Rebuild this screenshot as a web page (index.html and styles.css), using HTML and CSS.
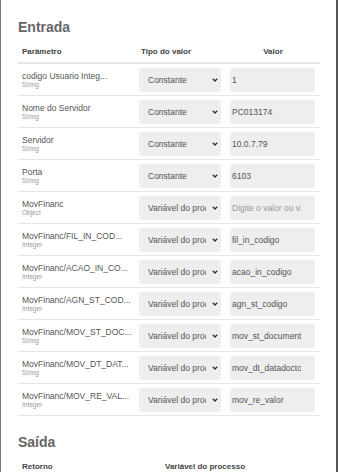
FILE: index.html
```html
<!DOCTYPE html>
<html lang="pt">
<head>
    <meta charset="UTF-8">
    <meta name="viewport" content="width=device-width, initial-scale=1.0">
    <title>Parâmetros</title>
    <link rel="stylesheet" href="styles.css">
</head>
<body>

    <div class="frame">
        <!-- Entrada -->
        <section class="section">
            <h2 class="section-title">Entrada</h2>
            <table class="param-table">
                <colgroup>
                    <col class="col-name">
                    <col class="col-type">
                    <col class="col-value">
                </colgroup>
                <thead>
                    <tr>
                        <th>Parâmetro</th>
                        <th class="th-type">Tipo do valor</th>
                        <th class="th-value">Valor</th>
                    </tr>
                </thead>
                <tbody>
                    <tr>
                        <td><div class="param-name">codigo Usuario Integ...</div><div class="param-kind">String</div></td>
                        <td><div class="select-box"><select><option>Constante</option></select><svg class="select-arrow" width="6" height="4" viewBox="0 0 6 4"><path d="M0.8 0.8 L3 3 L5.2 0.8" fill="none" stroke="#333" stroke-width="1.4"/></svg></div></td>
                        <td><input type="text" value="1"></td>
                    </tr>
                    <tr>
                        <td><div class="param-name">Nome do Servidor</div><div class="param-kind">String</div></td>
                        <td><div class="select-box"><select><option>Constante</option></select><svg class="select-arrow" width="6" height="4" viewBox="0 0 6 4"><path d="M0.8 0.8 L3 3 L5.2 0.8" fill="none" stroke="#333" stroke-width="1.4"/></svg></div></td>
                        <td><input type="text" value="PC013174"></td>
                    </tr>
                    <tr>
                        <td><div class="param-name">Servidor</div><div class="param-kind">String</div></td>
                        <td><div class="select-box"><select><option>Constante</option></select><svg class="select-arrow" width="6" height="4" viewBox="0 0 6 4"><path d="M0.8 0.8 L3 3 L5.2 0.8" fill="none" stroke="#333" stroke-width="1.4"/></svg></div></td>
                        <td><input type="text" value="10.0.7.79"></td>
                    </tr>
                    <tr>
                        <td><div class="param-name">Porta</div><div class="param-kind">String</div></td>
                        <td><div class="select-box"><select><option>Constante</option></select><svg class="select-arrow" width="6" height="4" viewBox="0 0 6 4"><path d="M0.8 0.8 L3 3 L5.2 0.8" fill="none" stroke="#333" stroke-width="1.4"/></svg></div></td>
                        <td><input type="text" value="6103"></td>
                    </tr>
                    <tr>
                        <td><div class="param-name">MovFinanc</div><div class="param-kind">Object</div></td>
                        <td><div class="select-box"><select><option>Variável do processo</option></select><svg class="select-arrow" width="6" height="4" viewBox="0 0 6 4"><path d="M0.8 0.8 L3 3 L5.2 0.8" fill="none" stroke="#333" stroke-width="1.4"/></svg></div></td>
                        <td><input type="text" placeholder="Digite o valor ou variável"></td>
                    </tr>
                    <tr>
                        <td><div class="param-name">MovFinanc/FIL_IN_COD...</div><div class="param-kind">Integer</div></td>
                        <td><div class="select-box"><select><option>Variável do processo</option></select><svg class="select-arrow" width="6" height="4" viewBox="0 0 6 4"><path d="M0.8 0.8 L3 3 L5.2 0.8" fill="none" stroke="#333" stroke-width="1.4"/></svg></div></td>
                        <td><input type="text" value="fil_in_codigo"></td>
                    </tr>
                    <tr>
                        <td><div class="param-name">MovFinanc/ACAO_IN_CO...</div><div class="param-kind">Integer</div></td>
                        <td><div class="select-box"><select><option>Variável do processo</option></select><svg class="select-arrow" width="6" height="4" viewBox="0 0 6 4"><path d="M0.8 0.8 L3 3 L5.2 0.8" fill="none" stroke="#333" stroke-width="1.4"/></svg></div></td>
                        <td><input type="text" value="acao_in_codigo"></td>
                    </tr>
                    <tr>
                        <td><div class="param-name">MovFinanc/AGN_ST_COD...</div><div class="param-kind">Integer</div></td>
                        <td><div class="select-box"><select><option>Variável do processo</option></select><svg class="select-arrow" width="6" height="4" viewBox="0 0 6 4"><path d="M0.8 0.8 L3 3 L5.2 0.8" fill="none" stroke="#333" stroke-width="1.4"/></svg></div></td>
                        <td><input type="text" value="agn_st_codigo"></td>
                    </tr>
                    <tr>
                        <td><div class="param-name">MovFinanc/MOV_ST_DOC...</div><div class="param-kind">String</div></td>
                        <td><div class="select-box"><select><option>Variável do processo</option></select><svg class="select-arrow" width="6" height="4" viewBox="0 0 6 4"><path d="M0.8 0.8 L3 3 L5.2 0.8" fill="none" stroke="#333" stroke-width="1.4"/></svg></div></td>
                        <td><input type="text" value="mov_st_documento"></td>
                    </tr>
                    <tr>
                        <td><div class="param-name">MovFinanc/MOV_DT_DAT...</div><div class="param-kind">String</div></td>
                        <td><div class="select-box"><select><option>Variável do processo</option></select><svg class="select-arrow" width="6" height="4" viewBox="0 0 6 4"><path d="M0.8 0.8 L3 3 L5.2 0.8" fill="none" stroke="#333" stroke-width="1.4"/></svg></div></td>
                        <td><input type="text" value="mov_dt_datadoctos"></td>
                    </tr>
                    <tr>
                        <td><div class="param-name">MovFinanc/MOV_RE_VAL...</div><div class="param-kind">Integer</div></td>
                        <td><div class="select-box"><select><option>Variável do processo</option></select><svg class="select-arrow" width="6" height="4" viewBox="0 0 6 4"><path d="M0.8 0.8 L3 3 L5.2 0.8" fill="none" stroke="#333" stroke-width="1.4"/></svg></div></td>
                        <td><input type="text" value="mov_re_valor"></td>
                    </tr>
                </tbody>
            </table>
        </section>

        <!-- Saída -->
        <section class="section section-out">
            <h2 class="section-title">Saída</h2>
            <table class="param-table">
                <colgroup>
                    <col class="col-return">
                    <col class="col-var">
                </colgroup>
                <thead>
                    <tr>
                        <th>Retorno</th>
                        <th>Variável do processo</th>
                    </tr>
                </thead>
            </table>
        </section>
    </div>

</body>
</html>
```

FILE: styles.css
```css
* {
    margin: 0;
    padding: 0;
    box-sizing: border-box;
}

body {
    font-family: 'Liberation Sans', Arial, sans-serif;
    background: #fff;
    color: #555;
}

.frame {
    height: 100vh;
    overflow: hidden;
    border-left: 1px solid #777;
    border-right: 2px solid #555;
    padding: 19px 0 0 17px;
}

.section-title {
    font-size: 14px;
    line-height: 16px;
    font-weight: bold;
    color: #666;
    margin-bottom: 4px;
}

.section-out {
    margin-top: 18px;
}

.param-table {
    width: 302px;
    border-collapse: collapse;
    table-layout: fixed;
}

.col-name { width: 117px; }
.col-type { width: 91px; }
.col-value { width: 94px; }
.col-return { width: 143px; }
.col-var { width: 159px; }

.param-table th {
    font-size: 8px;
    line-height: 10px;
    font-weight: bold;
    color: #444;
    text-align: left;
    padding: 8px 4px 5px;
    border-bottom: 2px solid #e6e6e6;
}

.param-table th.th-type {
    padding-left: 6px;
}

.param-table th.th-value {
    text-align: center;
}

.param-table td {
    padding: 4px 0 3px 4px;
    border-bottom: 1px solid #e6e6e6;
    vertical-align: middle;
}

.param-name {
    font-size: 8.5px;
    line-height: 10px;
    color: #555;
    white-space: nowrap;
}

.param-kind {
    font-size: 6.5px;
    line-height: 8px;
    color: #999;
}

.select-box {
    position: relative;
    width: 82px;
    height: 24px;
}

.select-box select {
    appearance: none;
    -webkit-appearance: none;
    width: 100%;
    height: 100%;
    border: none;
    border-radius: 3px;
    background: #eeeeee;
    font-family: inherit;
    font-size: 8.5px;
    color: #555;
    padding: 0 15px 0 9px;
    outline: none;
}

.select-arrow {
    position: absolute;
    right: 3px;
    top: 10px;
}

.param-table input {
    width: 85px;
    height: 24px;
    border: none;
    border-radius: 3px;
    background: #eeeeee;
    font-family: inherit;
    font-size: 8.5px;
    color: #555;
    padding: 0 14px 0 2px;
    outline: none;
}

.param-table input::placeholder {
    color: #999;
}
```
